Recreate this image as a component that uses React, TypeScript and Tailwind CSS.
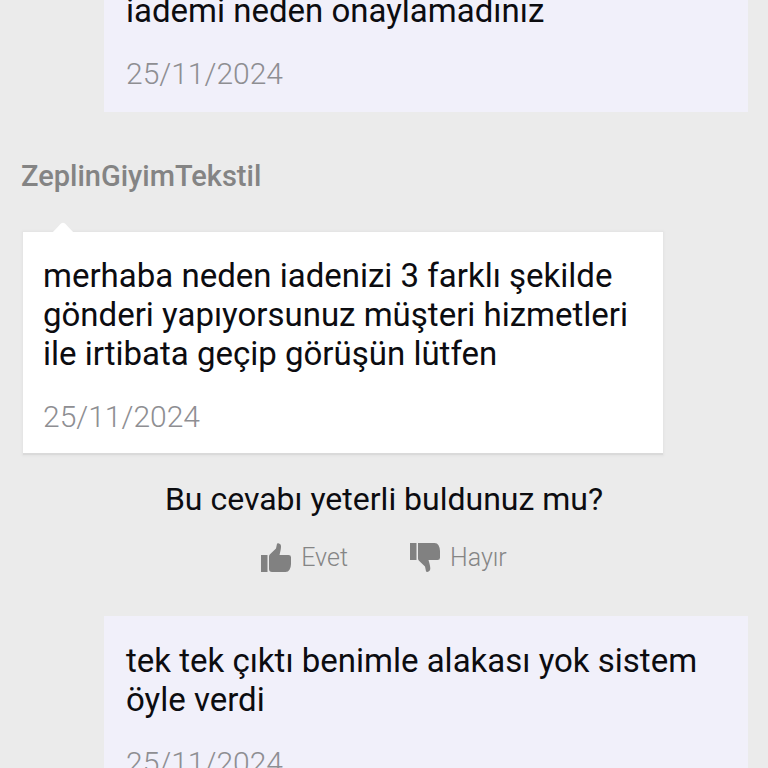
import type { ReactNode } from "react";

function Message({ text, date }: { text: string; date: string }) {
  return (
    <>
      <p className="text-[33px] leading-[39px] text-[#0c0c10]">{text}</p>
      <time className="mt-[26px] block text-[30px] leading-9 font-light text-[#8e8e92]">
        {date}
      </time>
    </>
  );
}

function CustomerMessage({ text, date }: { text: string; date: string }) {
  return (
    <article className="mr-5 ml-[104px] bg-[#f1f0fa] px-[22px] pt-[25px] pb-5">
      <Message text={text} date={date} />
    </article>
  );
}

function SellerMessage({ text, date }: { text: string; date: string }) {
  return (
    <article className="relative mt-[38px] mr-[105px] ml-[23px] border-b-2 border-[#dadada] bg-white px-5 pt-6 pb-[18px] shadow-[0_0_2px_1px_#e2e2e2]">
      <svg
        viewBox="0 0 22 11"
        className="absolute -top-[10px] left-[29px] h-[11px] w-[22px] fill-white"
        aria-hidden="true"
      >
        <path d="M0 11 9 1.4Q11 0 13 1.4L22 11Z" />
      </svg>
      <Message text={text} date={date} />
    </article>
  );
}

function VoteButton({ label, children }: { label: string; children: ReactNode }) {
  return (
    <button
      type="button"
      className="flex cursor-pointer items-center gap-[10px] text-[25px] leading-8 font-light text-[#858585]"
    >
      <svg viewBox="0 0 30 30" className="size-[30px] fill-[#818181]" aria-hidden="true">
        {children}
      </svg>
      {label}
    </button>
  );
}

export default function App() {
  return (
    <main className="h-screen overflow-hidden bg-[#ebebeb] font-[Roboto,sans-serif]">
      <div className="-mt-[34px]">
        <CustomerMessage text="iademi neden onaylamadınız" date="25/11/2024" />

        <h2 className="mt-[46px] ml-[21px] text-[29px] leading-9 font-medium text-[#848484]">
          ZeplinGiyimTekstil
        </h2>
        <SellerMessage
          text="merhaba neden iadenizi 3 farklı şekilde gönderi yapıyorsunuz müşteri hizmetleri ile irtibata geçip görüşün lütfen"
          date="25/11/2024"
        />

        <section className="mt-[25px] mb-[42px]">
          <p className="text-center text-[32px] leading-[39px] text-[#0c0c10]">
            Bu cevabı yeterli buldunuz mu?
          </p>
          <div className="mt-[23px] flex justify-center gap-[62px]">
            <VoteButton label="Evet">
              <path d="M0 12H6.5V29H0Z" />
              <path d="M8 13.5Q8 12.3 9 11.3L15 5.5L16 0.8Q16.3 0 17.3 0.2Q20 0.7 20 3.5Q20 6 18.5 12H27.5Q30 12 30 14.3V21Q30 24 28.5 26.7Q27.3 29 24.5 29H11Q8 29 8 26Z" />
            </VoteButton>
            <VoteButton label="Hayır">
              <path d="M0 0H6.5V17H0Z" />
              <path d="M8 0H24.5Q27.3 0 28.5 2.3Q30 5 30 8V14.7Q30 17 27.5 17H18.5Q20.3 23 20.3 25.5Q20.3 28.3 17.3 28.9Q16.3 29 16 28.2L15 23.5L9 17.7Q8 16.7 8 15.5Z" />
            </VoteButton>
          </div>
        </section>

        <CustomerMessage
          text="tek tek çıktı benimle alakası yok sistem öyle verdi"
          date="25/11/2024"
        />
      </div>
    </main>
  );
}
